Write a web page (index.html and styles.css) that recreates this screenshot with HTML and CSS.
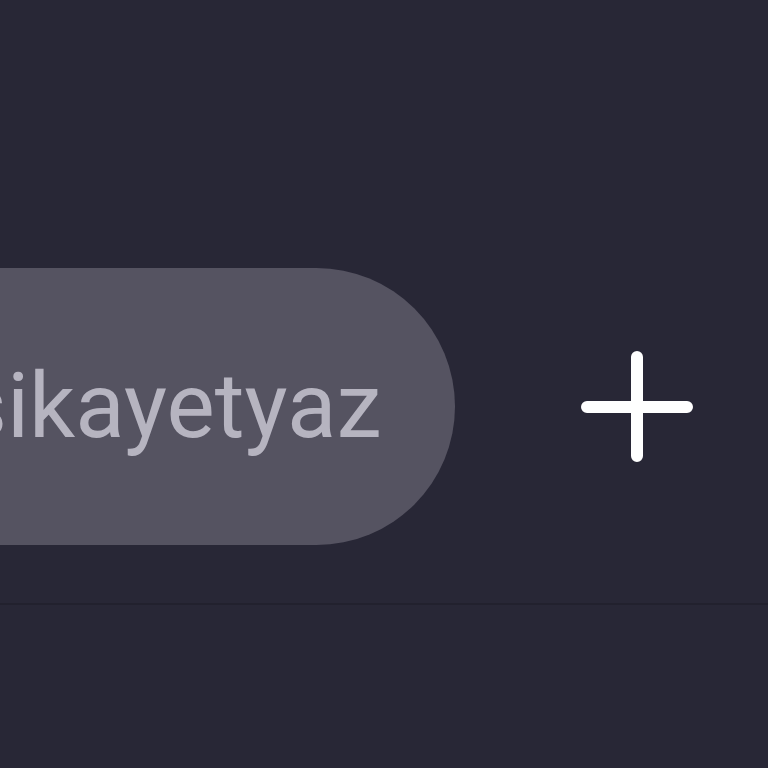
FILE: index.html
```html
<!DOCTYPE html>
<html lang="tr">
<head>
<meta charset="utf-8">
<link rel="stylesheet" href="styles.css">
</head>
<body>
<header class="bar">
  <div class="pill"><span class="tag">şikayetyaz</span></div>
  <button class="add" aria-label="Ekle">
    <svg width="112" height="112" viewBox="0 0 112 112"><path d="M56 6V105M6 56H106" stroke="#fff" stroke-width="12" stroke-linecap="round" fill="none"/></svg>
  </button>
</header>
</body>
</html>
```
FILE: styles.css
```css
html, body {
  margin: 0;
  height: 100%;
  background: #282736;
  overflow: hidden;
}
.bar {
  display: flex;
  align-items: center;
  padding-top: 268px;
  padding-bottom: 58px;
  border-bottom: 2px solid #22212e;
}
.pill {
  flex: none;
  height: 277px;
  display: flex;
  align-items: center;
  margin-left: -100px;
  padding-left: 60px;
  padding-right: 73px;
  background: #555361;
  border-radius: 0 139px 139px 0;
}
.tag {
  font-family: Roboto, "Noto Sans", sans-serif;
  font-size: 91px;
  line-height: 1;
  color: #b6b4c0;
  white-space: nowrap;
}
.add {
  flex: none;
  margin-left: 126px;
  padding: 0;
  border: 0;
  background: none;
  width: 112px;
  height: 112px;
  display: block;
}
.add svg { display: block; }
```
